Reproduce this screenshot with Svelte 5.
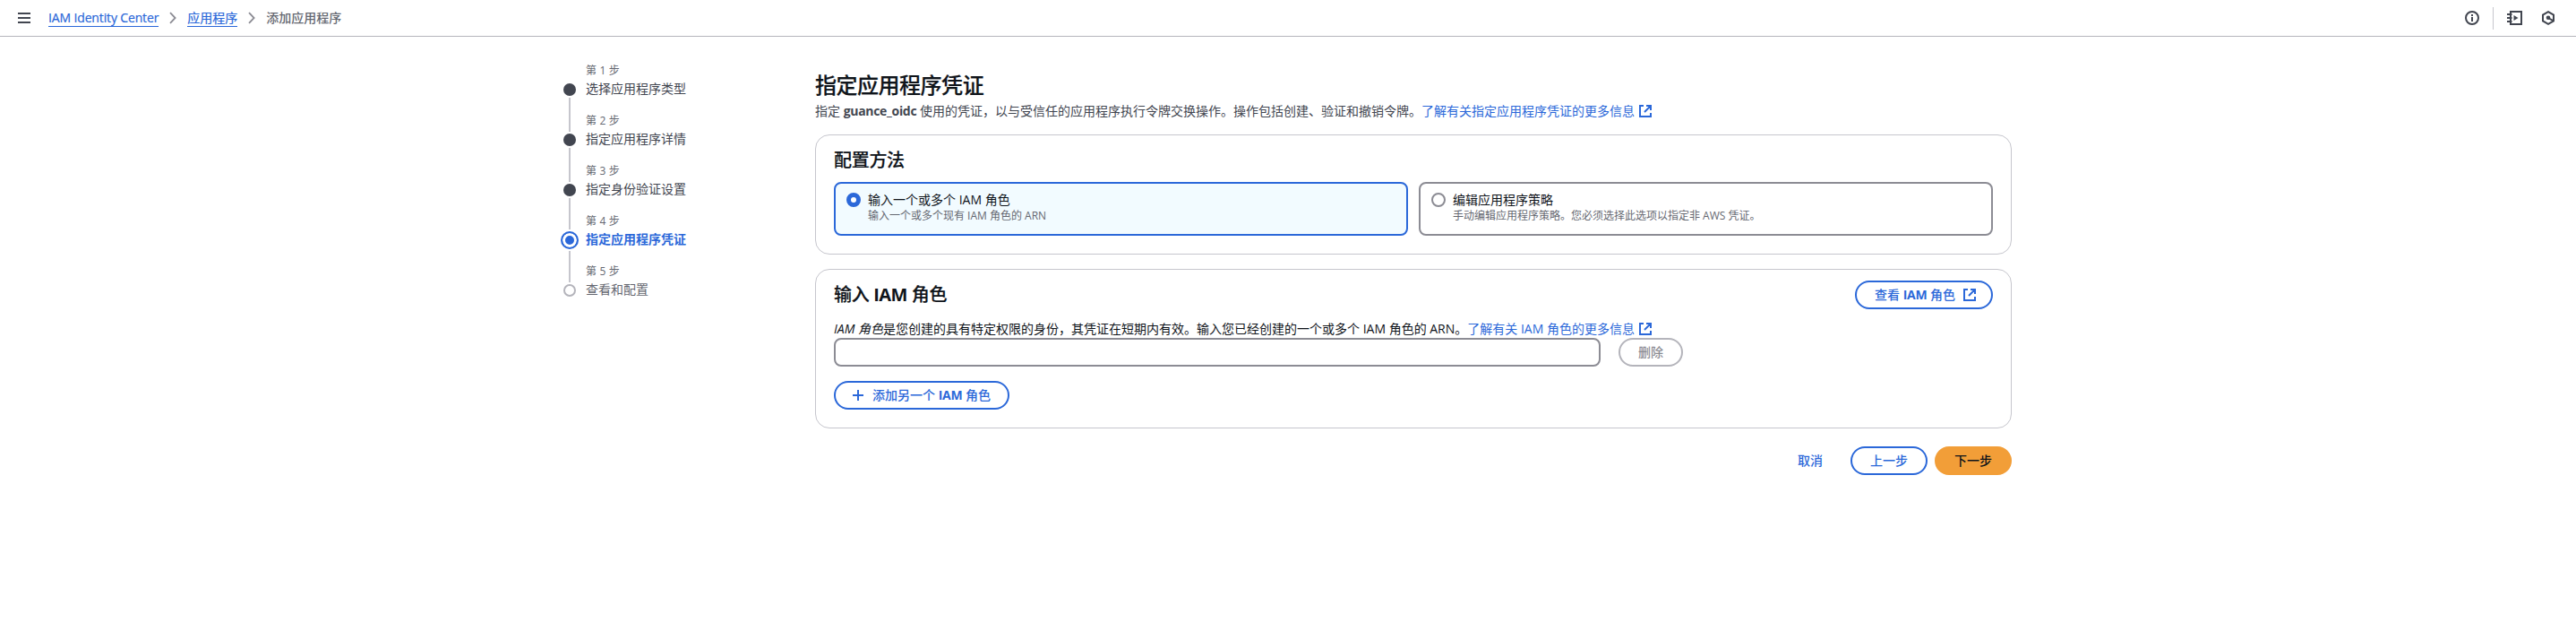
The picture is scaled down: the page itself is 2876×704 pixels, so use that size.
<script>
  const steps = [
    { title: '选择应用程序类型', state: 'done' },
    { title: '指定应用程序详情', state: 'done' },
    { title: '指定身份验证设置', state: 'done' },
    { title: '指定应用程序凭证', state: 'active' },
    { title: '查看和配置', state: 'next' }
  ];
  const tiles = [
    { label: '输入一个或多个 IAM 角色', description: '输入一个或多个现有 IAM 角色的 ARN', selected: true },
    { label: '编辑应用程序策略', description: '手动编辑应用程序策略。您必须选择此选项以指定非 AWS 凭证。', selected: false }
  ];
</script>

{#snippet external()}
  <svg class="external" viewBox="0 0 16 16" width="16" height="16" fill="none" stroke="currentColor" stroke-width="2">
    <path d="M9 2h5v5M7 9l6.6-6.6M14 10v4H2V2h4" />
  </svg>
{/snippet}

{#snippet chevron()}
  <svg class="chevron" viewBox="0 0 8 14" width="8" height="14" fill="none" stroke="#8c8c94" stroke-width="1.8">
    <path d="m1 1.2 5.6 5.8L1 12.8" />
  </svg>
{/snippet}

<header>
  <svg class="menu" viewBox="0 0 14 12" width="14" height="12" fill="#424650">
    <path d="M0 0h14v2H0zM0 5h14v2H0zM0 10h14v2H0z" />
  </svg>
  <nav>
    <a class="crumb latin" href="#center">IAM Identity Center</a>
    {@render chevron()}
    <a class="crumb" href="#apps">应用程序</a>
    {@render chevron()}
    <span class="current">添加应用程序</span>
  </nav>
  <div class="tools">
    <svg viewBox="0 0 16 16" width="16" height="16" fill="none" stroke="#424650" stroke-width="2">
      <circle cx="8" cy="8" r="7" /><path d="M8 7v5M8 4v2" />
    </svg>
    <i></i>
    <svg class="book" viewBox="0 0 17 16" width="17" height="16" fill="none" stroke="#424650" stroke-width="2">
      <path d="M4 4V1h12v14H4v-3M4 5v6M0 4h5.5M0 8h5.5M0 12h5.5" />
      <path d="M7.5 5v6l5-3z" fill="#424650" stroke="none" />
    </svg>
    <svg class="hex" viewBox="0 0 16 16" width="16" height="16" fill="none" stroke="#424650" stroke-width="2">
      <path d="M8 1.2 14 4.6v6.8L8 14.8 2 11.4V4.6z" />
      <circle cx="8" cy="7.8" r="2.3" fill="#424650" stroke="none" /><path d="m8 8 5.5 3.2" />
    </svg>
  </div>
</header>

<div class="page">
  <aside>
    {#each steps as step, i}
      <div class="step {step.state}">
        <div class="rail">
          <b class="dot"></b>
          {#if i < steps.length - 1}<i class="line"></i>{/if}
        </div>
        <div class="words">
          <small>第 {i + 1} 步</small>
          <span>{step.title}</span>
        </div>
      </div>
    {/each}
  </aside>

  <main>
    <h1>指定应用程序凭证</h1>
    <p class="intro">指定 <strong>guance_oidc</strong> 使用的凭证，以与受信任的应用程序执行令牌交换操作。操作包括创建、验证和撤销令牌。<a href="#more">了解有关指定应用程序凭证的更多信息{@render external()}</a></p>

    <section class="method">
      <h2>配置方法</h2>
      <div class="tiles">
        {#each tiles as tile}
          <div class="tile" class:selected={tile.selected}>
            <b class="radio"></b>
            <div>
              <div class="label">{tile.label}</div>
              <div class="hint">{tile.description}</div>
            </div>
          </div>
        {/each}
      </div>
    </section>

    <section class="roles">
      <div class="heading">
        <h2>输入 <strong>IAM</strong> 角色</h2>
        <button class="view"><span>查看 <strong>IAM</strong> 角色</span>{@render external()}</button>
      </div>
      <p class="about"><em>IAM 角色</em>是您创建的具有特定权限的身份，其凭证在短期内有效。输入您已经创建的一个或多个 IAM 角色的 ARN。<a href="#roles">了解有关 IAM 角色的更多信息{@render external()}</a></p>
      <div class="entry">
        <input type="text" />
        <button class="remove" disabled>删除</button>
      </div>
      <button class="add">
        <svg viewBox="0 0 12 12" width="12" height="12" fill="none" stroke="currentColor" stroke-width="2"><path d="M6 0v12M0 6h12" /></svg>
        <span>添加另一个 <strong>IAM</strong> 角色</span>
      </button>
    </section>

    <footer>
      <button class="plain">取消</button>
      <button>上一步</button>
      <button class="primary">下一步</button>
    </footer>
  </main>
</div>

<style>
  :global(body) {
    background: #fff;
    color: #0f141a;
    font: 14px/20px 'Open Sans', 'Noto Sans CJK SC', sans-serif;
  }
  * { box-sizing: border-box; }
  svg { display: block; flex: none; }
  a { color: #2b68d9; text-decoration: none; }
  h1, h2, p { margin: 0; white-space: nowrap; }

  header {
    display: flex;
    align-items: center;
    height: 41px;
    padding: 0 23px 0 20px;
    border-bottom: 1px solid #b4b4bb;
  }
  nav { display: flex; align-items: center; margin-left: 20px; }
  .crumb { height: 20px; border-bottom: 1px solid #2b68d9; line-height: 20px; -webkit-text-stroke: .2px; }
  .latin { letter-spacing: -.14px; }
  .chevron { margin: 0 12px; }
  .current { color: #656871; font-weight: 500; }
  .tools { display: flex; align-items: center; margin-left: auto; }
  .tools i { width: 1px; height: 25px; margin: 0 15px; background: #c6c6cd; }
  .hex { margin-left: 21px; }

  .page { display: flex; padding: 28px 0 0 626px; }
  aside { width: 284px; }
  .step { display: flex; height: 56px; }
  .rail { display: flex; flex-direction: column; align-items: center; width: 20px; padding-top: 24px; }
  .dot { flex: none; width: 14px; height: 14px; border-radius: 50%; background: #424650; }
  .line { flex: none; width: 2px; height: 38px; margin-top: 2px; background: #c6c6cd; }
  .words { display: flex; flex-direction: column; padding: 2px 0 0 8px; white-space: nowrap; }
  small { color: #656871; font-size: 12px; line-height: 16px; letter-spacing: .15px; }
  .words span { margin-top: 2px; color: #424650; }
  .step:nth-child(3) .line { height: 35px; }
  .active .rail { padding-top: 21px; }
  .active .dot {
    width: 20px;
    height: 20px;
    border: 2px solid #2b68d9;
    background: #2b68d9;
    box-shadow: inset 0 0 0 3px #fff;
  }
  .active .line { height: 35px; }
  .active .words span { color: #2b68d9; font-weight: 700; }
  .next .dot { border: 2px solid #b4b4bb; background: #fff; }
  .next .words span { color: #656871; }

  main { width: 1336px; padding-top: 11px; }
  h1 { font-size: 24px; font-weight: 500; line-height: 30px; letter-spacing: -.48px; -webkit-text-stroke: .2px; }
  h2 { font-size: 20px; font-weight: 500; line-height: 24px; letter-spacing: -.3px; -webkit-text-stroke: .2px; }
  h2 strong { font-weight: 700; letter-spacing: -.6px; -webkit-text-stroke: 0; }
  .intro { margin-top: 4px; color: #424650; }
  .intro strong { letter-spacing: -.3px; }
  .external { display: inline-block; margin-left: 4px; vertical-align: -3px; }

  section { border: 1px solid #c6c6cd; border-radius: 16px; padding: 0 20px; }
  .method { height: 134px; margin-top: 16px; padding-top: 16px; }
  .tiles { display: grid; grid-template-columns: 1fr 1fr; gap: 12px; width: 1294px; margin-top: 12px; }
  .tile { display: flex; height: 60px; padding: 8px 12px; border: 2px solid #8c8c94; border-radius: 8px; }
  .tile.selected { border-color: #2b68d9; background: #f2fbff; }
  .radio { flex: none; width: 16px; height: 16px; margin: 2px 8px 0 0; border: 2px solid #8c8c94; border-radius: 50%; background: #fff; }
  .selected .radio { border: 5px solid #2b68d9; }
  .hint { color: #656871; font-size: 12px; line-height: 16px; }

  .roles { height: 178px; margin-top: 16px; padding-top: 12px; }
  .heading { display: flex; align-items: center; justify-content: space-between; height: 32px; }
  .about { margin-top: 12px; }
  .entry { display: flex; gap: 20px; }
  input { width: 856px; height: 32px; border: 2px solid #8c8c94; border-radius: 8px; padding: 0 10px; }
  button {
    display: inline-flex;
    align-items: center;
    justify-content: center;
    width: 86px;
    height: 32px;
    padding: 0;
    border: 2px solid #2b68d9;
    border-radius: 20px;
    background: #fff;
    color: #2b68d9;
    font: inherit;
    font-weight: 500;
    white-space: nowrap;
  }
  button strong { font-weight: 700; letter-spacing: -.3px; }
  .view { width: 154px; padding-left: 4px; }
  .view .external { margin-left: 8px; }
  .remove { width: 72px; border-color: #b4b4bb; color: #8c8c94; }
  .add { gap: 10px; width: 196px; margin-top: 16px; }
  footer { display: flex; justify-content: flex-end; gap: 8px; margin-top: 20px; }
  .plain { width: 74px; border-color: transparent; }
  .primary { border-color: #f29e38; background: #f29e38; color: #0f141a; }
</style>
